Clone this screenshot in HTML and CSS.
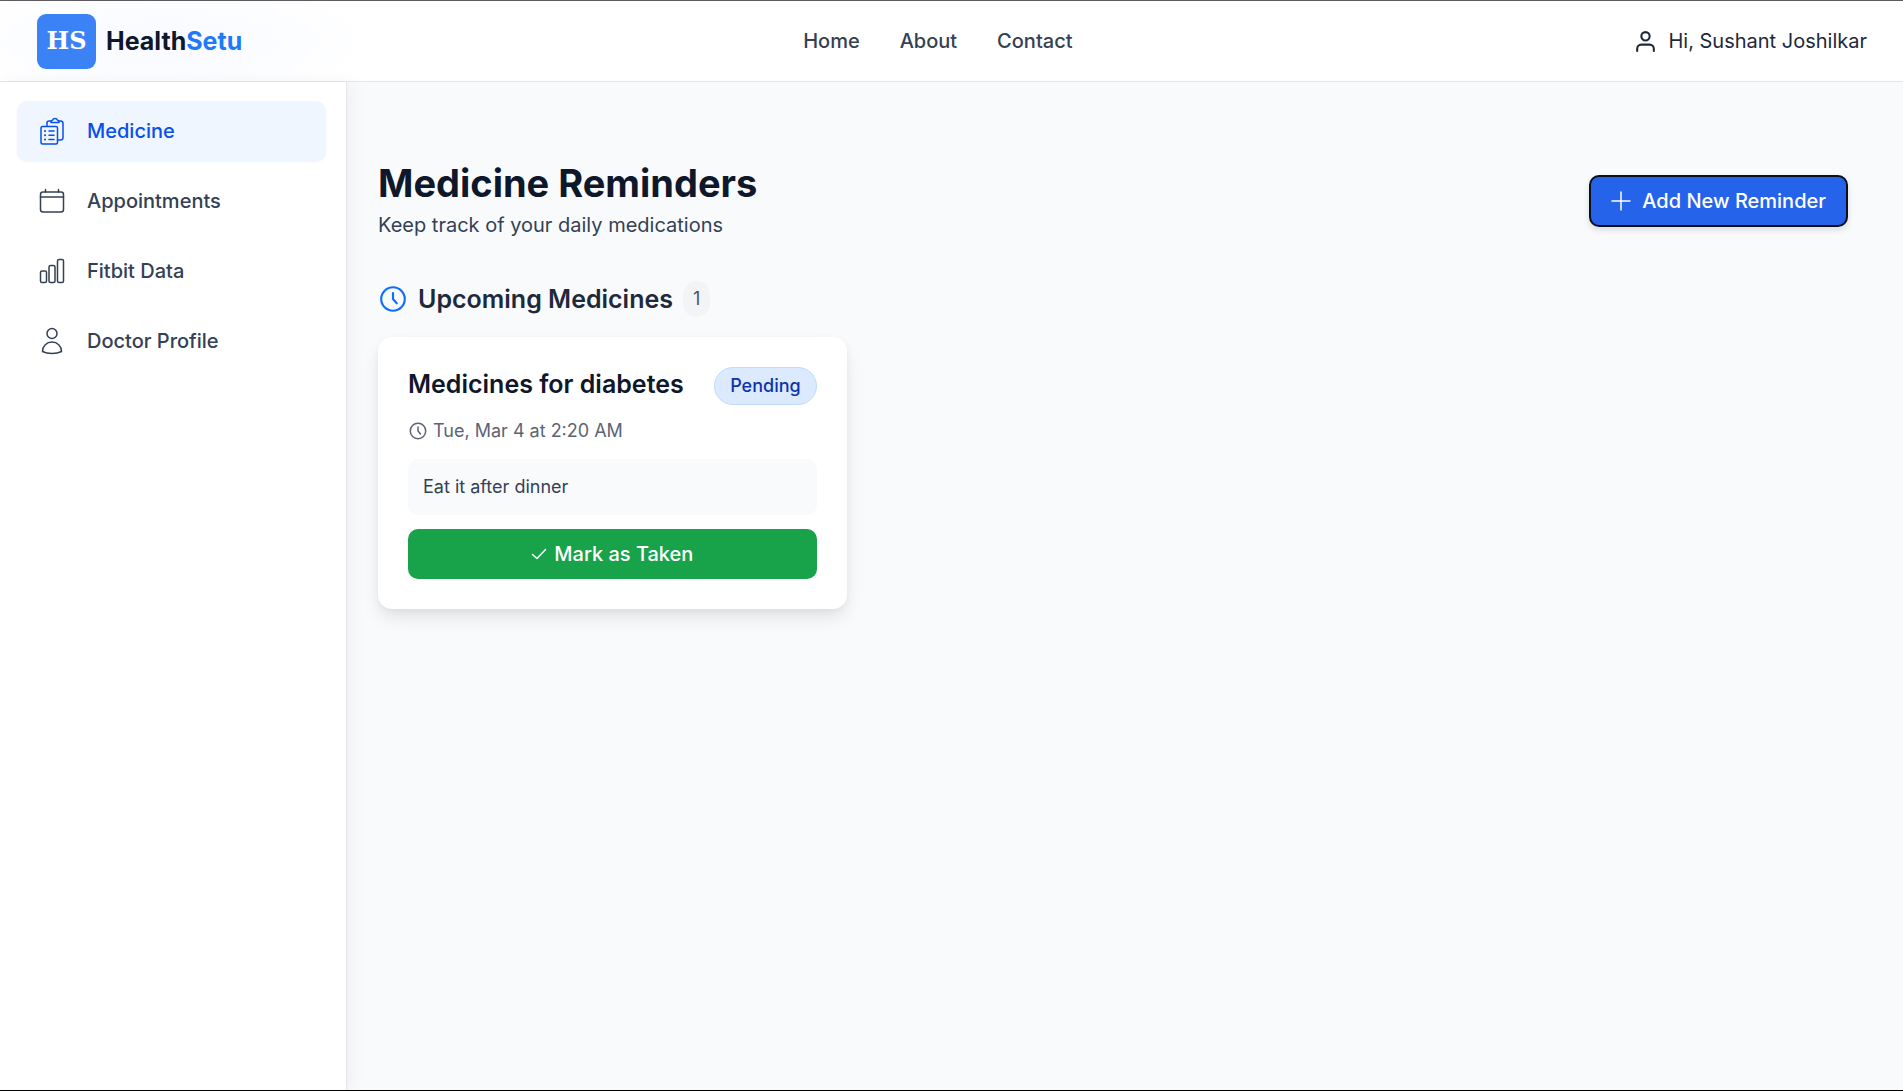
FILE: index.html
```html
<!DOCTYPE html>
<html lang="en">
<head>
<meta charset="utf-8">
<meta name="viewport" content="width=device-width, initial-scale=1">
<title>HealthSetu</title>
<link rel="stylesheet" href="styles.css">
</head>
<body>
<header class="topbar">
  <a class="brand" href="#"><span class="brand-mark">HS</span><span class="brand-name">Health<span class="brand-accent">Setu</span></span></a>
  <nav class="topnav" aria-label="Main">
    <a href="#">Home</a>
    <a href="#">About</a>
    <a href="#">Contact</a>
  </nav>
  <a class="user" href="#">
    <svg class="icon-user" viewBox="0 0 24 24" aria-hidden="true"><path d="M20 21v-2a4 4 0 0 0-4-4H8a4 4 0 0 0-4 4v2"/><circle cx="12" cy="7" r="4"/></svg>
    <span>Hi, Sushant Joshilkar</span>
  </a>
</header>
<div class="layout">
  <nav class="sidebar" aria-label="Sections">
    <a class="side-link active" href="#">
      <svg class="side-icon" viewBox="0 0 28 28" aria-hidden="true"><path d="M9 9V6a2 2 0 0 1 2-2h2M21 4h1.500a2.500 2.500 0 0 1 2.500 2.500v14a2.500 2.500 0 0 1-2.500 2.500H19.500"/><path d="M13 5.500V4.500a1.500 1.500 0 0 1 1.500-1.300c.4-1 1.300-1.700 2.500-1.700s2.100.7 2.500 1.700A1.500 1.500 0 0 1 21 4.500v1z"/><rect x="3" y="9.500" width="16.500" height="17.500" rx="1.500"/><path d="M11 14h5M11 18.300h5M11 22.600h5"/><path stroke-width="2" d="M7 14h.1M7 18.300h.1M7 22.600h.1"/></svg>
      <span>Medicine</span>
    </a>
    <a class="side-link" href="#">
      <svg class="side-icon" viewBox="0 0 28 28" aria-hidden="true"><rect x="2.500" y="5" width="23" height="20" rx="2.500"/><path d="M2.500 10h23M7.500 2.500V5M20.500 2.500V5"/></svg>
      <span>Appointments</span>
    </a>
    <a class="side-link" href="#">
      <svg class="side-icon" viewBox="0 0 28 28" aria-hidden="true"><rect x="2.500" y="14" width="6" height="11.500" rx="1.500"/><rect x="11" y="8.500" width="6" height="17" rx="1.500"/><rect x="19.500" y="2.500" width="6" height="23" rx="1.500"/></svg>
      <span>Fitbit Data</span>
    </a>
    <a class="side-link" href="#">
      <svg class="side-icon" viewBox="0 0 28 28" aria-hidden="true"><circle cx="14" cy="6.500" r="5"/><path d="M4.500 24.500c0-5.500 4.200-9.500 9.500-9.500s9.500 4 9.500 9.500c-5 2.700-14 2.700-19 0z"/></svg>
      <span>Doctor Profile</span>
    </a>
  </nav>
  <main class="content">
    <div class="page-head">
      <div>
        <h1>Medicine Reminders</h1>
        <p class="subtitle">Keep track of your daily medications</p>
      </div>
      <button class="add-button" type="button">
        <svg class="icon-plus" viewBox="0 0 20 20" aria-hidden="true"><path d="M10 1v18M1 10h18"/></svg>
        <span>Add New Reminder</span>
      </button>
    </div>
    <section>
      <h2 class="section-title">
        <svg class="icon-clock" viewBox="0 0 28 28" aria-hidden="true"><circle cx="14" cy="14" r="11"/><path d="M14 8.500V14l3.500 4"/></svg>
        <span>Upcoming Medicines</span>
        <span class="count">1</span>
      </h2>
      <div class="cards">
        <article class="card">
          <div class="card-head">
            <h3>Medicines for diabetes</h3>
            <span class="badge">Pending</span>
          </div>
          <p class="when">
            <svg class="icon-when" viewBox="0 0 20 20" aria-hidden="true"><circle cx="10" cy="10" r="7.700"/><path d="M10 6v4l2.500 3"/></svg>
            <span>Tue, Mar 4 at 2:20 AM</span>
          </p>
          <p class="note">Eat it after dinner</p>
          <button class="taken-button" type="button">
            <svg class="icon-check" viewBox="0 0 16 16" aria-hidden="true"><path d="M1.500 8.500l4.500 4L14.500 3.500"/></svg>
            <span>Mark as Taken</span>
          </button>
        </article>
      </div>
    </section>
  </main>
</div>
</body>
</html>
```
FILE: styles.css
```css
* {
  box-sizing: border-box;
}

body {
  margin: 0;
  min-height: 100vh;
  display: flex;
  flex-direction: column;
  border-top: 1px solid #5c5c5e;
  border-bottom: 1px solid #000;
  background: #f9fafc;
  color: #334155;
  font-family: Inter, "Liberation Sans", sans-serif;
  font-size: 20px;
  line-height: 28px;
}

h1, h2, h3, p {
  margin: 0;
}

a {
  color: inherit;
  text-decoration: none;
}

button {
  font: inherit;
  cursor: pointer;
}

svg {
  flex: none;
  fill: none;
  stroke: currentColor;
  stroke-width: 2;
  stroke-linecap: round;
  stroke-linejoin: round;
}

.topbar {
  display: flex;
  align-items: center;
  justify-content: space-between;
  height: 81px;
  padding: 0 36px 0 37px;
  border-bottom: 1px solid #e2e5ea;
  background: radial-gradient(ellipse 220px 60px at 160px 40px, #f8faff, #fff);
}

.brand {
  display: flex;
  align-items: center;
  gap: 10px;
}

.brand-mark {
  display: flex;
  align-items: center;
  justify-content: center;
  width: 59px;
  height: 55px;
  border-radius: 9px;
  background: #3b82f6;
  color: #fff;
  font-family: "DejaVu Serif", serif;
  font-size: 24px;
  font-weight: 700;
}

.brand-name {
  color: #0f172a;
  font-size: 25px;
  font-weight: 700;
}

.brand-accent {
  color: #1d7af8;
}

.topnav {
  display: flex;
  gap: 40px;
  font-weight: 500;
}

.user {
  display: flex;
  align-items: center;
  gap: 10px;
  color: #1e293b;
}

.icon-user {
  width: 25px;
  height: 25px;
}

.layout {
  display: flex;
  flex: 1;
}

.sidebar {
  display: flex;
  flex-direction: column;
  gap: 10px;
  width: 347px;
  flex: none;
  padding: 19px 20px 20px 17px;
  border-right: 1px solid #e3e5e9;
  background: #fff;
  box-shadow: 4px 0 16px rgba(0, 0, 0, 0.05);
}

.side-link {
  display: flex;
  align-items: center;
  gap: 21px;
  height: 60px;
  padding: 0 21px;
  border-radius: 10px;
  font-weight: 500;
}

.side-link.active {
  background: #eff6ff;
  color: #0b4fe8;
  box-shadow: 0 1px 2px rgba(0, 0, 0, 0.05);
}

.side-icon {
  width: 28px;
  height: 28px;
  stroke-width: 1.5;
}

.content {
  flex: 1;
  min-width: 0;
  padding: 77px 55px 40px 31px;
}

.page-head {
  display: flex;
  align-items: center;
  justify-content: space-between;
  margin-bottom: 38px;
}

h1 {
  color: #0f172a;
  font-size: 38px;
  font-weight: 650;
  line-height: 48px;
}

.subtitle {
  line-height: 36px;
}

.add-button {
  display: flex;
  align-items: center;
  gap: 11px;
  height: 52px;
  padding: 0 20px;
  border: 2px solid #0a0f1c;
  border-radius: 10px;
  background: #2563eb;
  color: #fff;
  font-weight: 500;
  box-shadow: 0 3px 6px rgba(0, 0, 0, 0.12);
}

.icon-plus {
  width: 20px;
  height: 20px;
  stroke-width: 1.5;
}

.section-title {
  display: flex;
  align-items: center;
  gap: 10px;
  margin-bottom: 20px;
  color: #1e293b;
  font-size: 25px;
  font-weight: 600;
  line-height: 36px;
}

.icon-clock {
  width: 30px;
  height: 30px;
  color: #0d6efd;
}

.count {
  padding: 0 10px;
  border-radius: 18px;
  background: #f3f4f6;
  color: #475569;
  font-size: 18px;
  font-weight: 400;
}

.cards {
  display: grid;
  grid-template-columns: repeat(3, minmax(0, 1fr));
  gap: 32px;
}

.card {
  display: flex;
  flex-direction: column;
  padding: 30px;
  border-radius: 14px;
  background: #fff;
  box-shadow: 0 10px 18px -2px rgba(0, 0, 0, 0.1), 0 2px 6px rgba(0, 0, 0, 0.04);
}

.card-head {
  display: flex;
  justify-content: space-between;
  margin-bottom: 12px;
}

h3 {
  color: #0f172a;
  font-size: 25px;
  font-weight: 600;
  line-height: 34px;
}

.badge {
  padding: 4px 15px;
  border: 1px solid #bfdbfe;
  border-radius: 20px;
  background: #dbeafe;
  color: #1033ab;
  font-size: 18px;
  font-weight: 500;
}

.when {
  display: flex;
  align-items: center;
  gap: 5px;
  margin-bottom: 14px;
  color: #5b6474;
  font-size: 18px;
}

.icon-when {
  width: 20px;
  height: 20px;
  stroke-width: 1.5;
}

.note {
  margin-bottom: 14px;
  padding: 14px 15px;
  border-radius: 10px;
  background: #f9fafc;
  font-size: 18px;
}

.taken-button {
  display: flex;
  align-items: center;
  justify-content: center;
  gap: 7px;
  height: 50px;
  border: 0;
  border-radius: 10px;
  background: #18a34a;
  color: #fff;
  font-weight: 500;
}

.icon-check {
  width: 16px;
  height: 16px;
  stroke-width: 1.5;
}
```
